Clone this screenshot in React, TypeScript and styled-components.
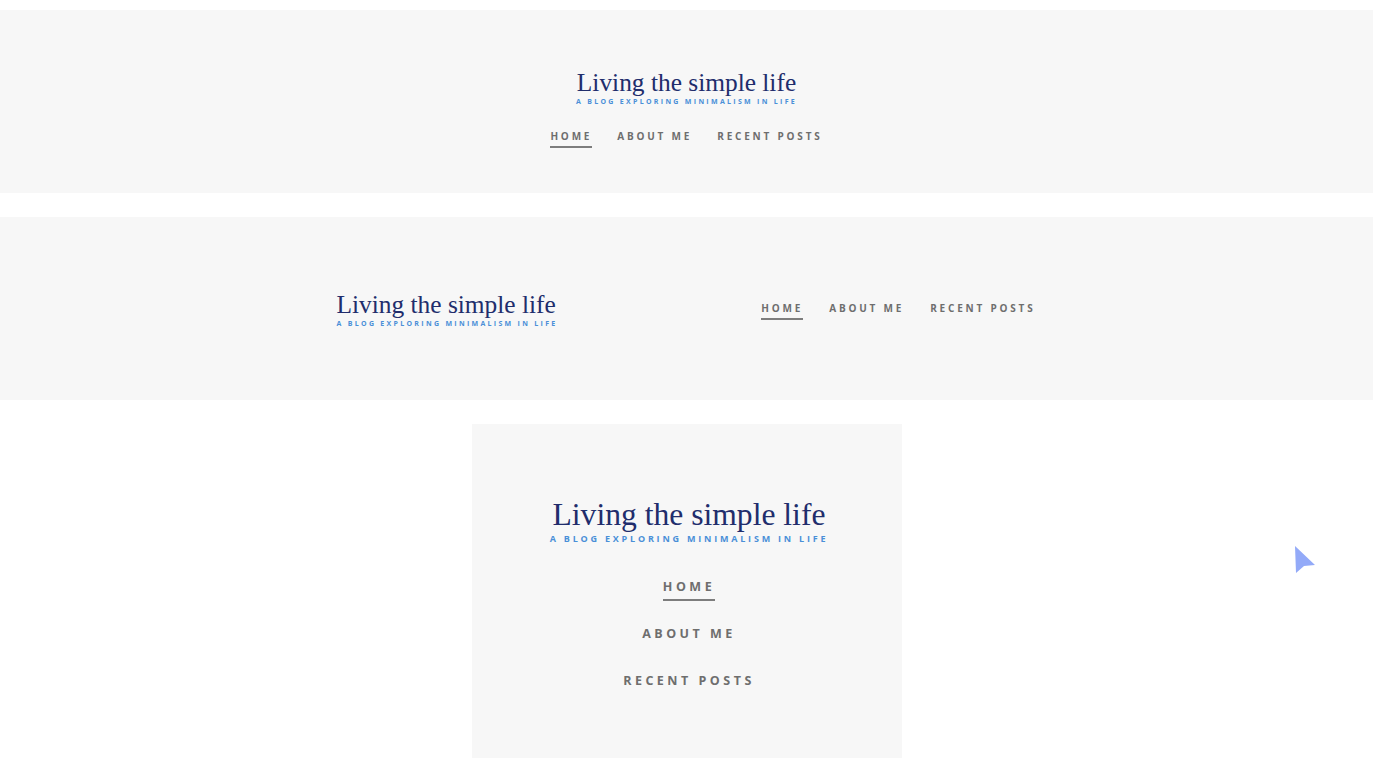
import React from 'react';
import styled, { createGlobalStyle, css } from 'styled-components';

const GlobalStyle = createGlobalStyle`
  html, body {
    margin: 0;
    padding: 0;
    background: #ffffff;
  }
  body {
    font-family: "Open Sans", "Liberation Sans", sans-serif;
  }
`;

type Variant = 'stacked' | 'row' | 'mobile';

const Page = styled.div`
  position: relative;
  padding: 10px 15px 0 0;
  display: flex;
  flex-direction: column;
  gap: 24px;
`;

const Header = styled.header<{ $variant: Variant }>`
  background: #f7f7f7;
  box-sizing: border-box;
  display: flex;

  ${props =>
    props.$variant === 'stacked' &&
    css`
      height: 183px;
      flex-direction: column;
      align-items: center;
      padding-top: 58px;
    `}

  ${props =>
    props.$variant === 'row' &&
    css`
      height: 183px;
      align-items: center;
    `}

  ${props =>
    props.$variant === 'mobile' &&
    css`
      width: 430px;
      height: 334px;
      margin: 0 auto;
      flex-direction: column;
      align-items: center;
      padding: 74px 0 0 5px;
    `}
`;

const Inner = styled.div`
  width: 700px;
  margin: 0 auto;
  display: flex;
  justify-content: space-between;
  align-items: center;
`;

const Brand = styled.div<{ $align: 'center' | 'left' }>`
  display: flex;
  flex-direction: column;
  align-items: ${props => (props.$align === 'center' ? 'center' : 'flex-start')};
`;

const Title = styled.h1<{ $large?: boolean }>`
  margin: 0;
  font-family: "Liberation Serif", "Times New Roman", serif;
  font-weight: 400;
  color: #212d6c;
  font-size: ${props => (props.$large ? '31.6px' : '25.4px')};
  line-height: ${props => (props.$large ? '34px' : '28px')};
  white-space: nowrap;
`;

const Tagline = styled.p<{ $large?: boolean }>`
  margin: 1px 0 0;
  font-family: "Open Sans", "Liberation Sans", sans-serif;
  font-weight: 700;
  text-transform: uppercase;
  color: #4a8fd8;
  font-size: ${props => (props.$large ? '9px' : '7px')};
  line-height: ${props => (props.$large ? '11px' : '9px')};
  letter-spacing: ${props => (props.$large ? '2.8px' : '2.3px')};
  white-space: nowrap;
`;

const Nav = styled.nav<{ $variant: Variant }>`
  display: flex;
  ${props =>
    props.$variant === 'stacked' &&
    css`
      margin-top: 23px;
      gap: 25px;
    `}
  ${props =>
    props.$variant === 'row' &&
    css`
      padding-top: 4px;
      gap: 26px;
      margin-right: 1px;
    `}
  ${props =>
    props.$variant === 'mobile' &&
    css`
      margin-top: 35px;
      flex-direction: column;
      align-items: center;
      gap: 25px;
    `}
`;

const NavLink = styled.a<{ $active?: boolean; $large?: boolean }>`
  display: inline-block;
  font-family: "Open Sans", "Liberation Sans", sans-serif;
  font-weight: 700;
  text-transform: uppercase;
  text-decoration: none;
  color: #6e6e6e;
  font-size: ${props => (props.$large ? '12.5px' : '10px')};
  line-height: ${props => (props.$large ? '16px' : '14px')};
  letter-spacing: ${props => (props.$large ? '3.5px' : '2.8px')};
  padding-bottom: ${props => (props.$large ? '4px' : '3px')};
  border-bottom: 2px solid ${props => (props.$active ? '#7d7d7d' : 'transparent')};
  white-space: nowrap;
`;

const Pointer = styled.svg`
  position: absolute;
  left: 1295px;
  top: 546px;
  width: 21px;
  height: 28px;
`;

const links = ['Home', 'About me', 'Recent posts'];

function Logo({ align, large }: { align: 'center' | 'left'; large?: boolean }) {
  return (
    <Brand $align={align}>
      <Title $large={large}>Living the simple life</Title>
      <Tagline $large={large}>A blog exploring minimalism in life</Tagline>
    </Brand>
  );
}

function Menu({ variant }: { variant: Variant }) {
  const large = variant === 'mobile';
  return (
    <Nav $variant={variant}>
      {links.map((label, i) => (
        <NavLink key={label} href="#" $active={i === 0} $large={large}>
          {label}
        </NavLink>
      ))}
    </Nav>
  );
}

export default function App() {
  return (
    <>
      <GlobalStyle />
      <Page>
        <Header $variant="stacked">
          <Logo align="center" />
          <Menu variant="stacked" />
        </Header>

        <Header $variant="row">
          <Inner>
            <Logo align="left" />
            <Menu variant="row" />
          </Inner>
        </Header>

        <Header $variant="mobile">
          <Logo align="center" large />
          <Menu variant="mobile" />
        </Header>

        <Pointer viewBox="0 0 21 28">
          <polygon points="0,0 20,19 9,20 1,27" fill="#93aaf8" />
        </Pointer>
      </Page>
    </>
  );
}
